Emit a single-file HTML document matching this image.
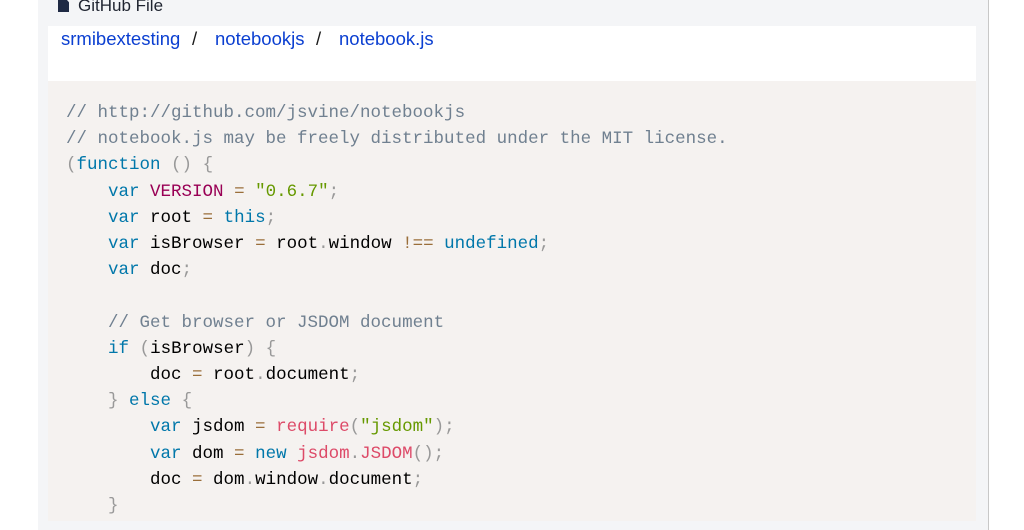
<!DOCTYPE html>
<html><head><style>
body{margin:0;width:1024px;height:512px;overflow:hidden;background:#fff;font-family:"Liberation Sans",sans-serif}
.panel{position:absolute;left:38px;top:-10px;width:950px;height:540px;background:#f4f5f7;border-right:1px solid #c8c8c8}
.title{position:absolute;left:58px;top:-4px;font-size:17px;color:#1f2430}
.title i{display:inline-block;width:11px;height:14px;background:#1f2a44;margin-right:9px;vertical-align:-1px;clip-path:polygon(0 0,65% 0,100% 30%,100% 100%,0 100%)}
.crumb{position:absolute;left:48px;top:26px;width:928px;height:55px;background:#fff;font-size:18.5px;color:#1a1a1a}
.crumb span{position:absolute;top:2px}
.crumb a{color:#0b3fd1;text-decoration:none}
.code{position:absolute;left:48px;top:81px;width:928px;height:440px;background:#f5f2f0}
pre{margin:0;position:absolute;left:66px;top:100px;font-family:"Liberation Mono",monospace;font-size:17.5px;line-height:26.2px;color:#000}
.c{color:#708090}.k{color:#0077aa}.p{color:#999}.o{color:#9a6e3a}.s{color:#669900}.v{color:#990055}.f{color:#dd4a68}
</style></head><body>
<div class="panel"></div>
<div class="title"><i></i>GitHub File</div>
<div class="crumb"><span style="left:13px"><a>srmibextesting</a></span><span style="left:144px">/</span><span style="left:167px"><a>notebookjs</a></span><span style="left:268px">/</span><span style="left:291px"><a>notebook.js</a></span></div>
<div class="code"></div>
<pre><span class="c">// http://github.com/jsvine/notebookjs</span>
<span class="c">// notebook.js may be freely distributed under the MIT license.</span>
<span class="p">(</span><span class="k">function</span> <span class="p">()</span> <span class="p">{</span>
    <span class="k">var</span> <span class="v">VERSION</span> <span class="o">=</span> <span class="s">"0.6.7"</span><span class="p">;</span>
    <span class="k">var</span> root <span class="o">=</span> <span class="k">this</span><span class="p">;</span>
    <span class="k">var</span> isBrowser <span class="o">=</span> root<span class="p">.</span>window <span class="o">!==</span> <span class="k">undefined</span><span class="p">;</span>
    <span class="k">var</span> doc<span class="p">;</span>

    <span class="c">// Get browser or JSDOM document</span>
    <span class="k">if</span> <span class="p">(</span>isBrowser<span class="p">)</span> <span class="p">{</span>
        doc <span class="o">=</span> root<span class="p">.</span>document<span class="p">;</span>
    <span class="p">}</span> <span class="k">else</span> <span class="p">{</span>
        <span class="k">var</span> jsdom <span class="o">=</span> <span class="f">require</span><span class="p">(</span><span class="s">"jsdom"</span><span class="p">);</span>
        <span class="k">var</span> dom <span class="o">=</span> <span class="k">new</span> <span class="f">jsdom<span class="p">.</span>JSDOM</span><span class="p">();</span>
        doc <span class="o">=</span> dom<span class="p">.</span>window<span class="p">.</span>document<span class="p">;</span>
    <span class="p">}</span>
</pre>
</body></html>
